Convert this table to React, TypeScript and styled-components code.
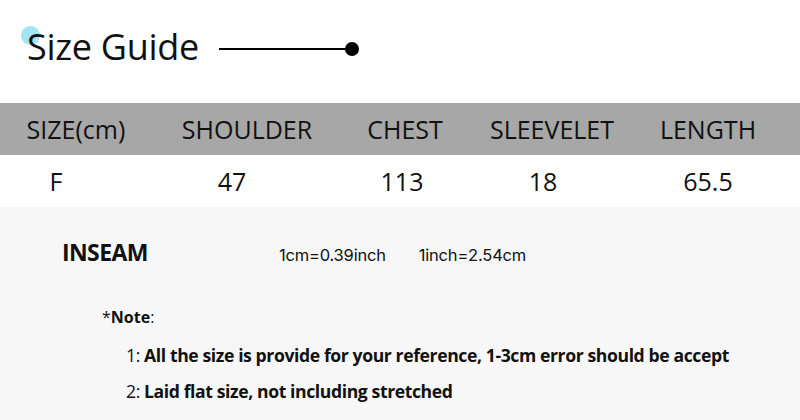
import React from 'react';
import styled, {createGlobalStyle} from "styled-components";

const GlobalStyle = createGlobalStyle`
    * {
        box-sizing: border-box;
    }

    body {
        margin: 0;
        background: #f7f7f7;
        font-family: "Open Sans", "Noto Sans", sans-serif;
        color: #111;
    }
`

type RowPropsType = {
    cells: string[]
    widths: number[]
}

const headerWidths = [152, 190, 126, 168, 144]
const valueWidths = [112, 240, 100, 182, 148]

const Row = (props: RowPropsType) => {
    return (
        <>
            {props.cells.map((c, i) => (
                <Cell key={i} $w={props.widths[i]}>{c}</Cell>
            ))}
        </>
    )
}

export default function App() {
    return (
        <Page>
            <GlobalStyle/>
            <Head>
                <Title>Size Guide</Title>
                <Decor>
                    <Line/>
                    <Dot/>
                </Decor>
            </Head>

            <HeaderBar>
                <Row cells={["SIZE(cm)", "SHOULDER", "CHEST", "SLEEVELET", "LENGTH"]} widths={headerWidths}/>
            </HeaderBar>
            <ValueBar>
                <Row cells={["F", "47", "113", "18", "65.5"]} widths={valueWidths}/>
            </ValueBar>

            <Info>
                <InseamRow>
                    <Inseam>INSEAM</Inseam>
                    <Convert>1cm=0.39inch</Convert>
                    <Convert>1inch=2.54cm</Convert>
                </InseamRow>
                <NoteTitle><span>*</span>Note<span>:</span></NoteTitle>
                <NoteList>
                    <NoteItem><Num>1:</Num> All the size is provide for your reference, 1-3cm error should be accept</NoteItem>
                    <NoteItem><Num>2:</Num> Laid flat size, not including stretched</NoteItem>
                </NoteList>
            </Info>
        </Page>
    )
}

const Page = styled.div`
    width: 800px;
    height: 420px;
    overflow: hidden;
    display: flex;
    flex-direction: column;
`

const Head = styled.div`
    background: #fff;
    height: 103px;
    display: flex;
    align-items: flex-start;
    padding: 20px 0 0 27px;
    gap: 20px;
`

const Title = styled.h1`
    position: relative;
    isolation: isolate;
    margin: 0;
    font-weight: 400;
    font-size: 36px;
    line-height: 54px;
    letter-spacing: -0.3px;

    &::before { // голубой кружок за буквой S
        content: "";
        position: absolute;
        left: -6px;
        top: 6px;
        width: 19px;
        height: 19px;
        border-radius: 50%;
        background: #a4e3f3;
        z-index: -1;
    }
`

const Decor = styled.div`
    display: flex;
    align-items: center;
    height: 58px;
`

const Line = styled.div`
    width: 130px;
    height: 2px;
    background: #000;
`

const Dot = styled.div`
    width: 14px;
    height: 14px;
    border-radius: 50%;
    background: #000;
    margin-left: -4px;
`

const HeaderBar = styled.div`
    background: #a7a7a7;
    height: 52px;
    display: flex;
    align-items: center;
    font-size: 25px;
`

const ValueBar = styled.div`
    background: #fff;
    height: 52px;
    display: flex;
    align-items: center;
    font-size: 25px;
`

const Cell = styled.div<{ $w: number }>`
    width: ${props => props.$w}px;
    text-align: center;
    white-space: nowrap;
`

const Info = styled.div`
    flex-grow: 1;
    background: #f7f7f7;
    padding: 29px 0 0 62px;
`

const InseamRow = styled.div`
    display: flex;
    align-items: baseline;
`

const Inseam = styled.div`
    width: 217px;
    font-weight: 700;
    font-size: 23px;
    letter-spacing: -0.6px;
`

const Convert = styled.div`
    font-family: "Inter", sans-serif;
    font-size: 16.5px;
    letter-spacing: -0.2px;
    margin-right: 33px;
`

const NoteTitle = styled.div`
    margin: 38px 0 0 40px;
    font-weight: 700;
    font-size: 16px;

    span {
        font-weight: 400;
    }
`

const NoteList = styled.div`
    margin: 15px 0 0 64px;
    display: flex;
    flex-direction: column;
    gap: 12px;
`

const NoteItem = styled.div`
    font-weight: 700;
    font-size: 17.6px;
    letter-spacing: -0.4px;
`

const Num = styled.span`
    font-weight: 400;
`
